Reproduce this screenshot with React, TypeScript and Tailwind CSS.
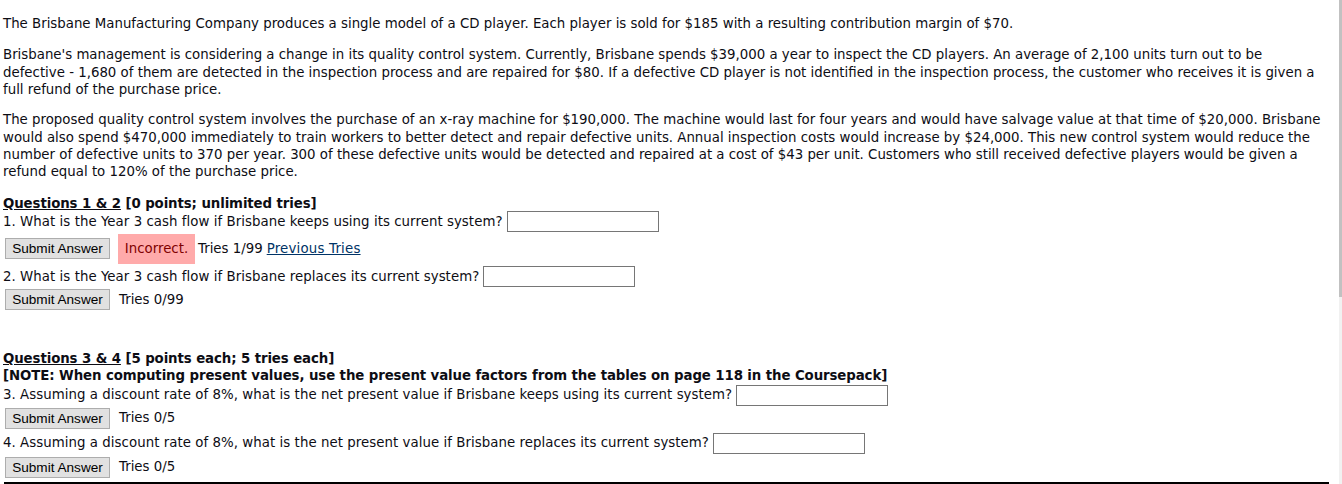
import React from "react";

const font = "font-['DejaVu_Sans',Verdana,sans-serif]";

function SubmitButton() {
  return (
    <button
      type="button"
      className="w-[105px] h-[21px] shrink-0 border border-[#adadad] bg-[#e1e1e1] text-[13.6px] leading-[19px] text-black font-['Liberation_Sans',Arial,sans-serif] flex items-center justify-center"
    >
      Submit Answer
    </button>
  );
}

function AnswerInput() {
  return <div className="ml-[4px] w-[152px] h-[21px] shrink-0 border border-[#767676] bg-white" />;
}

export default function App() {
  return (
    <div className={`flex h-[484px] w-[1342px] overflow-hidden bg-white text-[#0d0d14] ${font}`}>
      <div className="flex-1 pl-[3px] pt-[15px] text-[13.33px] leading-[17.33px]">
        <p className="mb-[14px]">
          The Brisbane Manufacturing Company produces a single model of a CD player. Each player is sold for $185 with a resulting contribution margin of $70.
        </p>
        <p className="mb-[13px] whitespace-nowrap">
          Brisbane's management is considering a change in its quality control system. Currently, Brisbane spends $39,000 a year to inspect the CD players. An average of 2,100 units turn out to be
          <br />
          defective - 1,680 of them are detected in the inspection process and are repaired for $80. If a defective CD player is not identified in the inspection process, the customer who receives it is given a
          <br />
          full refund of the purchase price.
        </p>
        <p className="mb-[14px] whitespace-nowrap">
          The proposed quality control system involves the purchase of an x-ray machine for $190,000. The machine would last for four years and would have salvage value at that time of $20,000. Brisbane
          <br />
          would also spend $470,000 immediately to train workers to better detect and repair defective units. Annual inspection costs would increase by $24,000. This new control system would reduce the
          <br />
          number of defective units to 370 per year. 300 of these defective units would be detected and repaired at a cost of $43 per unit. Customers who still received defective players would be given a
          <br />
          refund equal to 120% of the purchase price.
        </p>

        <div className="font-bold tracking-[-0.1px]">
          <span className="underline">Questions 1 &amp; 2</span> [0 points; unlimited tries]
        </div>
        <div className="flex items-center h-[21px] -mt-[1px] whitespace-nowrap tracking-[0.05px]">
          <span>1. What is the Year 3 cash flow if Brisbane keeps using its current system?</span>
          <AnswerInput />
        </div>
        <div className="flex items-center h-[30px] mt-[2px] pl-[2px] whitespace-nowrap">
          <SubmitButton />
          <span className="ml-[8px] h-[30px] w-[77px] bg-[#ffaaaa] text-[#800000] flex items-center justify-center">Incorrect.</span>
          <span className="ml-[3px]">Tries 1/99</span>
          <a className="ml-[4px] underline text-[#003366] tracking-[0.2px]" href="#">
            Previous Tries
          </a>
        </div>
        <div className="flex items-center h-[21px] mt-[2px] whitespace-nowrap tracking-[0.05px]">
          <span>2. What is the Year 3 cash flow if Brisbane replaces its current system?</span>
          <AnswerInput />
        </div>
        <div className="flex items-center h-[21px] mt-[2px] pl-[2px] whitespace-nowrap">
          <SubmitButton />
          <span className="ml-[9px]">Tries 0/99</span>
        </div>

        <div className="font-bold tracking-[-0.1px] mt-[40px]">
          <span className="underline">Questions 3 &amp; 4</span> [5 points each; 5 tries each]
        </div>
        <div className="font-bold tracking-[-0.1px]">
          [NOTE: When computing present values, use the present value factors from the tables on page 118 in the Coursepack]
        </div>
        <div className="flex items-center h-[21px] whitespace-nowrap tracking-[0.05px]">
          <span>3. Assuming a discount rate of 8%, what is the net present value if Brisbane keeps using its current system?</span>
          <AnswerInput />
        </div>
        <div className="flex items-center h-[21px] mt-[2px] pl-[2px] whitespace-nowrap">
          <SubmitButton />
          <span className="ml-[9px]">Tries 0/5</span>
        </div>
        <div className="flex items-center h-[21px] mt-[4px] whitespace-nowrap tracking-[0.05px]">
          <span>4. Assuming a discount rate of 8%, what is the net present value if Brisbane replaces its current system?</span>
          <AnswerInput />
        </div>
        <div className="flex items-center h-[21px] mt-[3px] pl-[2px] whitespace-nowrap">
          <SubmitButton />
          <span className="ml-[9px]">Tries 0/5</span>
        </div>
        <div className="mt-[4px] ml-[1px] w-[1325px] h-[20px] border-t-2 border-x-2 border-black" />
      </div>
      <div className="w-[3px] shrink-0 bg-[#f1f1f1] flex flex-col">
        <div className="h-[297px] bg-[#c1c1c1]" />
      </div>
    </div>
  );
}
